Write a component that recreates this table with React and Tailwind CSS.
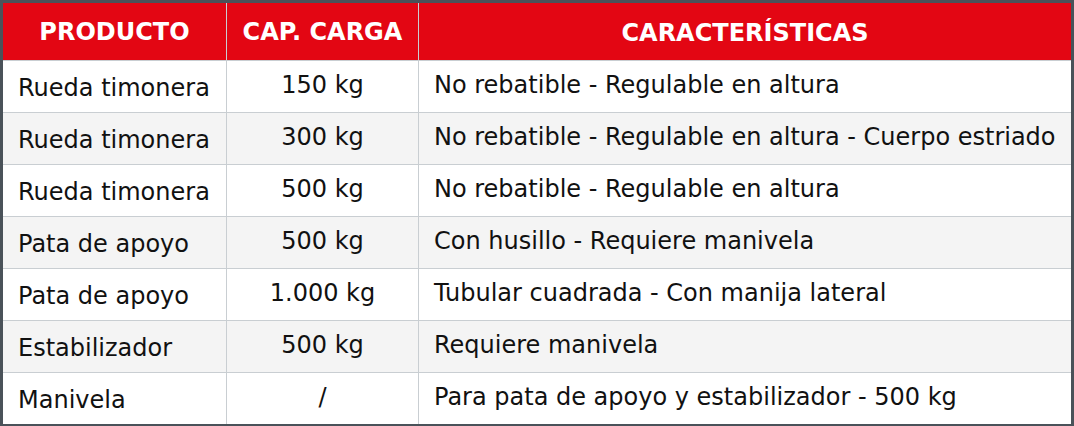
import React from "react";

const rows = [
  ["Rueda timonera", "150 kg", "No rebatible - Regulable en altura"],
  ["Rueda timonera", "300 kg", "No rebatible - Regulable en altura - Cuerpo estriado"],
  ["Rueda timonera", "500 kg", "No rebatible - Regulable en altura"],
  ["Pata de apoyo", "500 kg", "Con husillo - Requiere manivela"],
  ["Pata de apoyo", "1.000 kg", "Tubular cuadrada - Con manija lateral"],
  ["Estabilizador", "500 kg", "Requiere manivela"],
  ["Manivela", "/", "Para pata de apoyo y estabilizador - 500 kg"],
];

const App = () => {
  return (
    <div
      className="w-[1074px] h-[426px] bg-white border-[#4a5259] border-t-[3px] border-x-[3px] border-b-2 text-[24px] text-[#111]"
      style={{ fontFamily: '"DejaVu Sans", sans-serif' }}
    >
      <div className="grid grid-cols-[223px_1px_191px_1px_1fr] h-[57px] bg-[#e30613] text-white font-bold">
        <div className="flex items-center justify-center">PRODUCTO</div>
        <div className="bg-[#c9ced2]" />
        <div className="flex items-center justify-center">CAP. CARGA</div>
        <div className="bg-[#c9ced2]" />
        <div className="flex items-center justify-center pt-[3px]">CARACTERÍSTICAS</div>
      </div>

      {rows.map((r, i) => (
        <div
          key={i}
          className={`grid grid-cols-[223px_1px_191px_1px_1fr] h-[52px] border-t border-[#c9ced2] ${
            i % 2 === 1 ? "bg-[#f4f4f4]" : "bg-white"
          }`}
        >
          <div className="flex items-center pl-[15px] pt-[3px] leading-[33px]">{r[0]}</div>
          <div className="bg-[#c9ced2]" />
          <div className="text-center pt-[8px] leading-[33px]">{r[1]}</div>
          <div className="bg-[#c9ced2]" />
          <div className="pl-[15px] pt-[8px] leading-[33px] whitespace-nowrap">{r[2]}</div>
        </div>
      ))}
    </div>
  );
};

export default App;
